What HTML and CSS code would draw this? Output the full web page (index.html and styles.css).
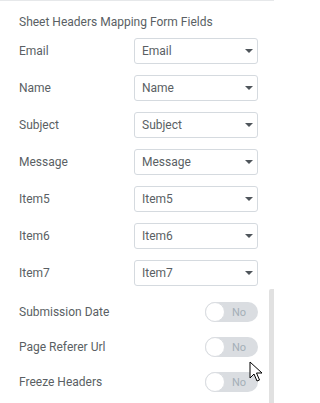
FILE: index.html
```html
<!DOCTYPE html>
<html>
<head>
<meta charset="utf-8">
<link rel="stylesheet" href="styles.css">
</head>
<body>
<div class="panel">
  <div class="heading">Sheet Headers Mapping Form Fields</div>
  <div class="maps">
    <div class="row"><span class="label">Email</span><div class="select"><span>Email</span><i class="caret"></i></div></div>
    <div class="row"><span class="label">Name</span><div class="select"><span>Name</span><i class="caret"></i></div></div>
    <div class="row"><span class="label">Subject</span><div class="select"><span>Subject</span><i class="caret"></i></div></div>
    <div class="row"><span class="label">Message</span><div class="select"><span>Message</span><i class="caret"></i></div></div>
    <div class="row"><span class="label">Item5</span><div class="select"><span>Item5</span><i class="caret"></i></div></div>
    <div class="row"><span class="label">Item6</span><div class="select"><span>Item6</span><i class="caret"></i></div></div>
    <div class="row"><span class="label">Item7</span><div class="select"><span>Item7</span><i class="caret"></i></div></div>
  </div>
  <div class="toggles">
    <div class="trow"><span class="label">Submission Date</span><div class="switch"><i class="knob"></i><span class="no">No</span></div></div>
    <div class="trow"><span class="label">Page Referer Url</span><div class="switch"><i class="knob"></i><span class="no">No</span></div></div>
    <div class="trow"><span class="label">Freeze Headers</span><div class="switch"><i class="knob"></i><span class="no">No</span></div></div>
  </div>
</div>
<div class="scrollbar"></div>
<svg class="cursor" width="14" height="22" viewBox="0 0 14 22">
  <path d="M1 1 L1 17 L5 13 L8 20 L10.5 19 L7.5 12 L13 12 Z" fill="#fff" stroke="#000" stroke-width="1" stroke-linejoin="round"/>
</svg>
</body>
</html>
```

FILE: styles.css
```css
html, body {
  margin: 0;
  padding: 0;
  background: #fff;
}
body {
  width: 274px;
  height: 403px;
  overflow: hidden;
  position: relative;
  font-family: Roboto, "Liberation Sans", sans-serif;
  font-size: 12px;
  color: #5a5f64;
}
.panel {
  border-top: 1px solid #e6e8ea;
  padding: 13px 16px 0 19px;
}
.heading {
  line-height: 16px;
  height: 16px;
}
.maps {
  margin-top: 8px;
  display: flex;
  flex-direction: column;
  gap: 11px;
}
.row {
  display: flex;
  align-items: center;
  height: 26px;
}
.label {
  flex: 1;
  line-height: 16px;
}
.select {
  width: 124px;
  height: 26px;
  box-sizing: border-box;
  border: 1px solid #d5dadf;
  border-radius: 3px;
  display: flex;
  align-items: center;
  justify-content: space-between;
  padding: 0 4px 0 7px;
  line-height: 16px;
}
.caret {
  width: 0;
  height: 0;
  border-left: 4px solid transparent;
  border-right: 4px solid transparent;
  border-top: 4px solid #4f555b;
}
.toggles {
  margin-top: 16px;
  display: flex;
  flex-direction: column;
  gap: 15px;
}
.trow {
  display: flex;
  align-items: center;
  height: 20px;
}
.switch {
  width: 53px;
  height: 20px;
  border-radius: 10px;
  background: #dadde1;
  position: relative;
  display: flex;
  align-items: center;
  justify-content: flex-end;
  padding-right: 12px;
  box-sizing: border-box;
}
.knob {
  position: absolute;
  left: 0;
  top: 0;
  width: 20px;
  height: 20px;
  box-sizing: border-box;
  border-radius: 50%;
  background: #fff;
  border: 1px solid #dadde1;
}
.no {
  font-size: 11px;
  color: #a4afb7;
}
.scrollbar {
  position: absolute;
  left: 269px;
  top: 289px;
  width: 5px;
  height: 114px;
  background: #e1e1e1;
  border-radius: 2px 0 0 0;
}
.cursor {
  position: absolute;
  left: 249px;
  top: 361px;
}
```
